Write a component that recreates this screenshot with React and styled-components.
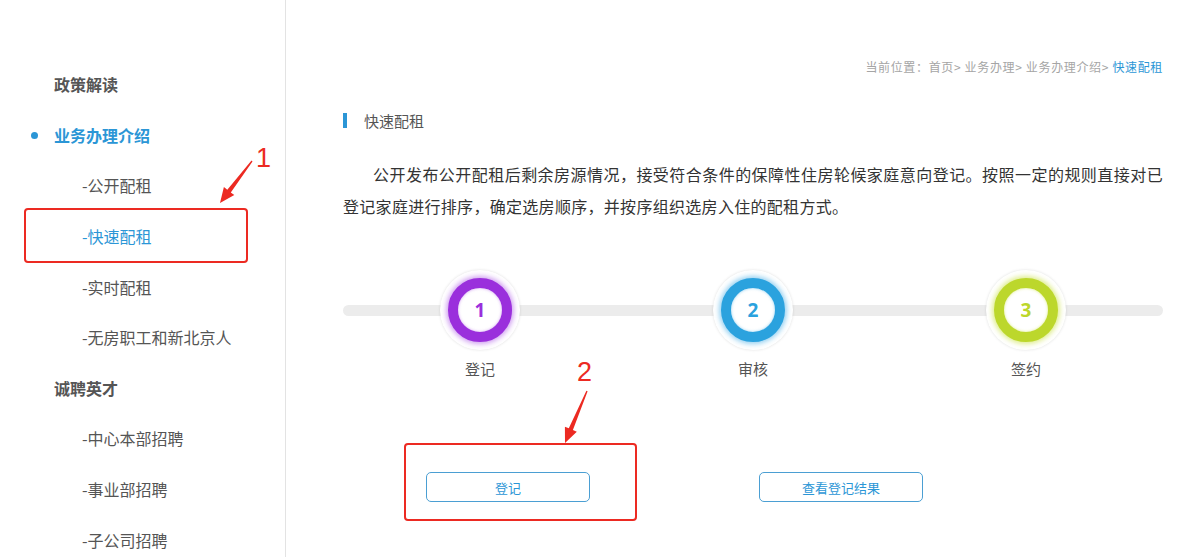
import React from 'react';
import styled, { createGlobalStyle } from 'styled-components';

const GlobalStyle = createGlobalStyle`
  html, body {
    margin: 0;
    padding: 0;
    background: #ffffff;
  }
  body {
    font-family: "Microsoft YaHei", "Noto Sans CJK SC", "Liberation Sans", sans-serif;
    color: #333;
  }
  * { box-sizing: border-box; }
`;

const RED = '#ec2a22';
const BLUE = '#2b96d6';

const menu = [
  { label: '政策解读', level: 0 },
  { label: '业务办理介绍', level: 0, active: true },
  { label: '-公开配租', level: 1 },
  { label: '-快速配租', level: 1, active: true },
  { label: '-实时配租', level: 1 },
  { label: '-无房职工和新北京人', level: 1 },
  { label: '诚聘英才', level: 0 },
  { label: '-中心本部招聘', level: 1 },
  { label: '-事业部招聘', level: 1 },
  { label: '-子公司招聘', level: 1 },
];

const steps = [
  { n: 1, label: '登记', color: '#9a2fdc', glow: 'rgba(170, 80, 230, 0.55)' },
  { n: 2, label: '审核', color: '#2ba2de', glow: 'rgba(60, 170, 230, 0.55)' },
  { n: 3, label: '签约', color: '#bcd72c', glow: 'rgba(200, 225, 60, 0.6)' },
];

// tapered arrow drawn from tail to tip
function Arrow({ tail, tip }) {
  const minX = Math.min(tail[0], tip[0]) - 12;
  const minY = Math.min(tail[1], tip[1]) - 12;
  const w = Math.abs(tail[0] - tip[0]) + 24;
  const h = Math.abs(tail[1] - tip[1]) + 24;
  const tx = tail[0] - minX, ty = tail[1] - minY;
  const px = tip[0] - minX, py = tip[1] - minY;
  const len = Math.hypot(px - tx, py - ty);
  const dx = (px - tx) / len, dy = (py - ty) / len;
  const nx = -dy, ny = dx;
  const headLen = 15;
  const bx = px - dx * headLen, by = py - dy * headLen;
  const pts = [
    [tx + nx * 0.6, ty + ny * 0.6],
    [bx + nx * 2.2, by + ny * 2.2],
    [bx + nx * 6.5, by + ny * 6.5],
    [px, py],
    [bx - nx * 6.5, by - ny * 6.5],
    [bx - nx * 2.2, by - ny * 2.2],
    [tx - nx * 0.6, ty - ny * 0.6],
  ].map(p => p.map(v => v.toFixed(1)).join(',')).join(' ');
  return (
    <ArrowSvg style={{ left: minX, top: minY }} width={w} height={h}>
      <polygon points={pts} fill={RED} />
    </ArrowSvg>
  );
}

export default function App() {
  return (
    <>
      <GlobalStyle />
      <Page>
        <Sidebar>
          {menu.map(item => (
            <MenuItem key={item.label} level={item.level} active={item.active}>
              {item.level === 0 && item.active && <Dot />}
              {item.label}
            </MenuItem>
          ))}
        </Sidebar>

        <Main>
          <Breadcrumb>
            当前位置：首页&gt; 业务办理&gt; 业务办理介绍&gt; <Current>快速配租</Current>
          </Breadcrumb>

          <SectionTitle>快速配租</SectionTitle>

          <Paragraph>
            公开发布公开配租后剩余房源情况，接受符合条件的保障性住房轮候家庭意向登记。按照一定的规则直接对已登记家庭进行排序，确定选房顺序，并按序组织选房入住的配租方式。
          </Paragraph>

          <Steps>
            {steps.map(s => (
              <Step key={s.n}>
                <Circle>
                  <Ring color={s.color} glow={s.glow}>
                    <Num color={s.color}>{s.n}</Num>
                  </Ring>
                </Circle>
                <StepLabel>{s.label}</StepLabel>
              </Step>
            ))}
          </Steps>

          <Buttons>
            <OutlineButton>登记</OutlineButton>
            <OutlineButton>查看登记结果</OutlineButton>
          </Buttons>
        </Main>

        <MarkBox style={{ left: 24, top: 208, width: 224, height: 55 }} />
        <MarkNum style={{ left: 256, top: 143 }}>1</MarkNum>
        <Arrow tail={[252, 161]} tip={[220, 203]} />

        <MarkBox style={{ left: 404, top: 443, width: 233, height: 78 }} />
        <MarkNum style={{ left: 577, top: 357 }}>2</MarkNum>
        <Arrow tail={[587, 391]} tip={[565, 443]} />
      </Page>
    </>
  );
}

const Page = styled.div`
  position: relative;
  width: 1200px;
  height: 557px;
  display: flex;
  overflow: hidden;
`;

const Sidebar = styled.div`
  width: 286px;
  flex-shrink: 0;
  border-right: 1px solid #e3e3e3;
  padding-top: 59px;
  display: flex;
  flex-direction: column;
`;

const MenuItem = styled.div`
  position: relative;
  flex-shrink: 0;
  height: 50.6px;
  display: flex;
  align-items: center;
  padding-left: ${p => (p.level === 0 ? '54px' : '82px')};
  font-size: 16px;
  font-weight: ${p => (p.level === 0 ? 700 : 400)};
  color: ${p => (p.active ? BLUE : '#555')};
  white-space: nowrap;
`;

const Dot = styled.span`
  position: absolute;
  left: 31px;
  top: 50%;
  width: 7px;
  height: 7px;
  margin-top: -3px;
  border-radius: 50%;
  background: ${BLUE};
`;

const Main = styled.div`
  flex: 1;
  padding: 58px 37px 0 57px;
  display: flex;
  flex-direction: column;
`;

const Breadcrumb = styled.div`
  align-self: flex-end;
  font-size: 12px;
  letter-spacing: 0.65px;
  line-height: 18px;
  color: #a5a5a5;
  white-space: nowrap;
`;

const Current = styled.span`
  color: ${BLUE};
`;

const SectionTitle = styled.h2`
  margin: 37px 0 0;
  border-left: 4px solid ${BLUE};
  padding-left: 17px;
  height: 15px;
  display: flex;
  align-items: center;
  font-size: 15px;
  font-weight: 400;
  color: #555;
`;

const Paragraph = styled.p`
  margin: 30px 0 0;
  font-size: 16px;
  letter-spacing: 0.3px;
  line-height: 32px;
  text-indent: 30px;
  text-align: justify;
  color: #333;
`;

const Steps = styled.div`
  position: relative;
  margin-top: 48px;
  height: 80px;
  display: grid;
  grid-template-columns: repeat(3, 80px);
  justify-content: space-between;
  padding: 0 97px;
  &::before {
    content: '';
    position: absolute;
    left: 0;
    right: 0;
    top: 34.5px;
    height: 11px;
    border-radius: 6px;
    background: #ececec;
  }
`;

const Step = styled.div`
  position: relative;
  display: flex;
  flex-direction: column;
  align-items: center;
`;

const Circle = styled.div`
  width: 80px;
  height: 80px;
  border-radius: 50%;
  background: #fff;
  box-shadow: 0 0 3px rgba(0, 0, 0, 0.12);
  display: flex;
  align-items: center;
  justify-content: center;
`;

const Ring = styled.div`
  width: 64px;
  height: 64px;
  border-radius: 50%;
  background: #fff;
  border: 10px solid ${p => p.color};
  box-shadow: 0 0 5px 2px ${p => p.glow}, inset 0 0 3px ${p => p.glow};
  display: flex;
  align-items: center;
  justify-content: center;
`;

const Num = styled.span`
  font-family: "Open Sans", "Liberation Sans", sans-serif;
  font-size: 19px;
  font-weight: 700;
  color: ${p => p.color};
`;

const StepLabel = styled.div`
  position: absolute;
  top: 88px;
  white-space: nowrap;
  font-size: 15px;
  color: #555;
`;

const Buttons = styled.div`
  margin-top: 122px;
  padding-left: 83px;
  display: flex;
  gap: 169px;
`;

const OutlineButton = styled.button`
  width: 164px;
  height: 30px;
  border: 1px solid #4b9fd3;
  border-radius: 5px;
  background: #fff;
  color: ${BLUE};
  font-family: inherit;
  font-size: 13px;
`;

const MarkBox = styled.div`
  position: absolute;
  border: 2px solid ${RED};
  border-radius: 4px;
`;

const MarkNum = styled.div`
  position: absolute;
  font-family: "Liberation Sans", sans-serif;
  font-size: 27px;
  line-height: 30px;
  color: ${RED};
`;

const ArrowSvg = styled.svg`
  position: absolute;
  overflow: visible;
`;
